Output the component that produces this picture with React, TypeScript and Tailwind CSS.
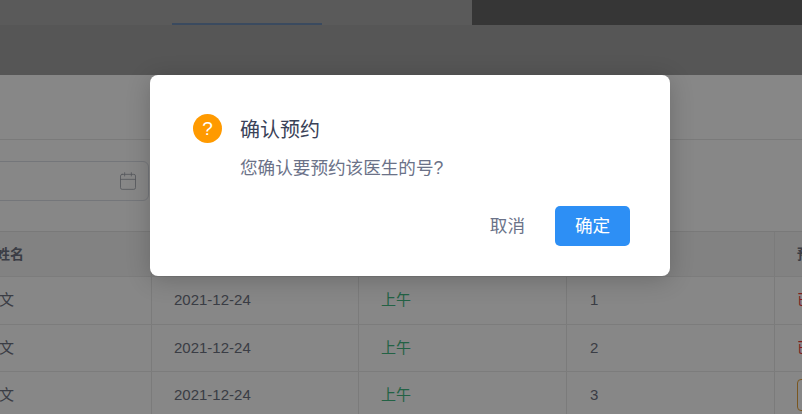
import { Calendar } from "lucide-react";

const rows = [
  { no: "1", last: <span className="text-[#ee3a3a]">已满</span> },
  { no: "2", last: <span className="text-[#ee3a3a]">已满</span> },
  {
    no: "3",
    last: (
      <button className="h-[32px] w-[60px] shrink-0 rounded-[4px] border border-[#e6a23c] text-[#e6a23c]">
        预约
      </button>
    ),
  },
];

const cell = "flex items-center whitespace-nowrap border-r border-[#e8e8e8] pl-[22px]";

function Table() {
  return (
    <div className="border-t border-[#e4e4e4] text-[15px] text-[#6f7382]">
      <div className="grid h-[45px] grid-cols-[152px_207px_208px_208px_1fr] border-b border-[#ebebeb] bg-[#f5f5f5] text-[14px] font-bold">
        <div className="flex items-center border-r border-[#e8e8e8]">
          <span className="-ml-[4px]">姓名</span>
        </div>
        <div className={cell}>出诊日期</div>
        <div className={cell}>时段</div>
        <div className={cell}>序号</div>
        <div className={`${cell} border-r-0`}>预约</div>
      </div>
      {rows.map((r) => (
        <div
          key={r.no}
          className="grid h-[47.5px] grid-cols-[152px_207px_208px_208px_1fr] border-b border-[#ebebeb]"
        >
          <div className="flex items-center border-r border-[#e8e8e8]">
            <span className="-ml-[1px]">文</span>
          </div>
          <div className={cell}>2021-12-24</div>
          <div className={`${cell} text-[#42b983]`}>上午</div>
          <div className={cell}>
            <span className="ml-[1px]">{r.no}</span>
          </div>
          <div className={`${cell} overflow-hidden border-r-0`}>{r.last}</div>
        </div>
      ))}
    </div>
  );
}

function Dialog() {
  return (
    <div className="absolute left-[150px] top-[75px] h-[201px] w-[520px] rounded-[8px] bg-white pl-[43px] pr-[40px] pt-[37px] shadow-[0_4px_24px_rgba(0,0,0,0.2)]">
      <div className="flex items-center">
        <span className="flex h-[29px] w-[29px] items-center justify-center rounded-full bg-[#ff9a00] text-[19px] font-light leading-none text-[#fff]">
          ?
        </span>
        <span className="ml-[18px] mt-[4px] text-[20px] leading-[28px] text-[#3a4258]">确认预约</span>
      </div>
      <p className="ml-[47px] mt-[11px] text-[17.6px] leading-[26px] text-[#6b7288]">
        您确认要预约该医生的号?
      </p>
      <div className="mt-[25px] flex items-center justify-end">
        <button className="mr-[30px] text-[17.6px] text-[#6b7288]">取消</button>
        <button className="h-[40px] w-[75px] rounded-[5px] bg-[#2d8ff5] text-[17.6px] text-white">
          确定
        </button>
      </div>
    </div>
  );
}

export default function App() {
  return (
    <div className="relative h-[414px] w-[802px] overflow-hidden bg-white font-['Liberation_Sans','Noto_Sans_CJK_SC',sans-serif]">
      <div className="flex h-[25px]">
        <div className="w-[472px] bg-[#aaaaaa] pl-[172px]">
          <div className="mt-[23px] h-[2px] w-[150px] bg-[#6f8cb4]" />
        </div>
        <div className="flex-1 bg-[#676767]" />
      </div>
      <div className="h-[50px] bg-[#a2a2a2]" />
      <div className="h-[65px] border-b border-[#e6e6e6]" />
      <div className="flex h-[91px] items-start pt-[21px]">
        <div className="-ml-[10px] flex h-[40px] w-[159px] items-center justify-end rounded-[6px] border border-[#dcdfe6] pr-[10px] text-[#a0a3ad]">
          <Calendar size={20} strokeWidth={1} />
        </div>
      </div>
      <Table />
      <div className="absolute inset-0 bg-black/[.47]" />
      <Dialog />
    </div>
  );
}
